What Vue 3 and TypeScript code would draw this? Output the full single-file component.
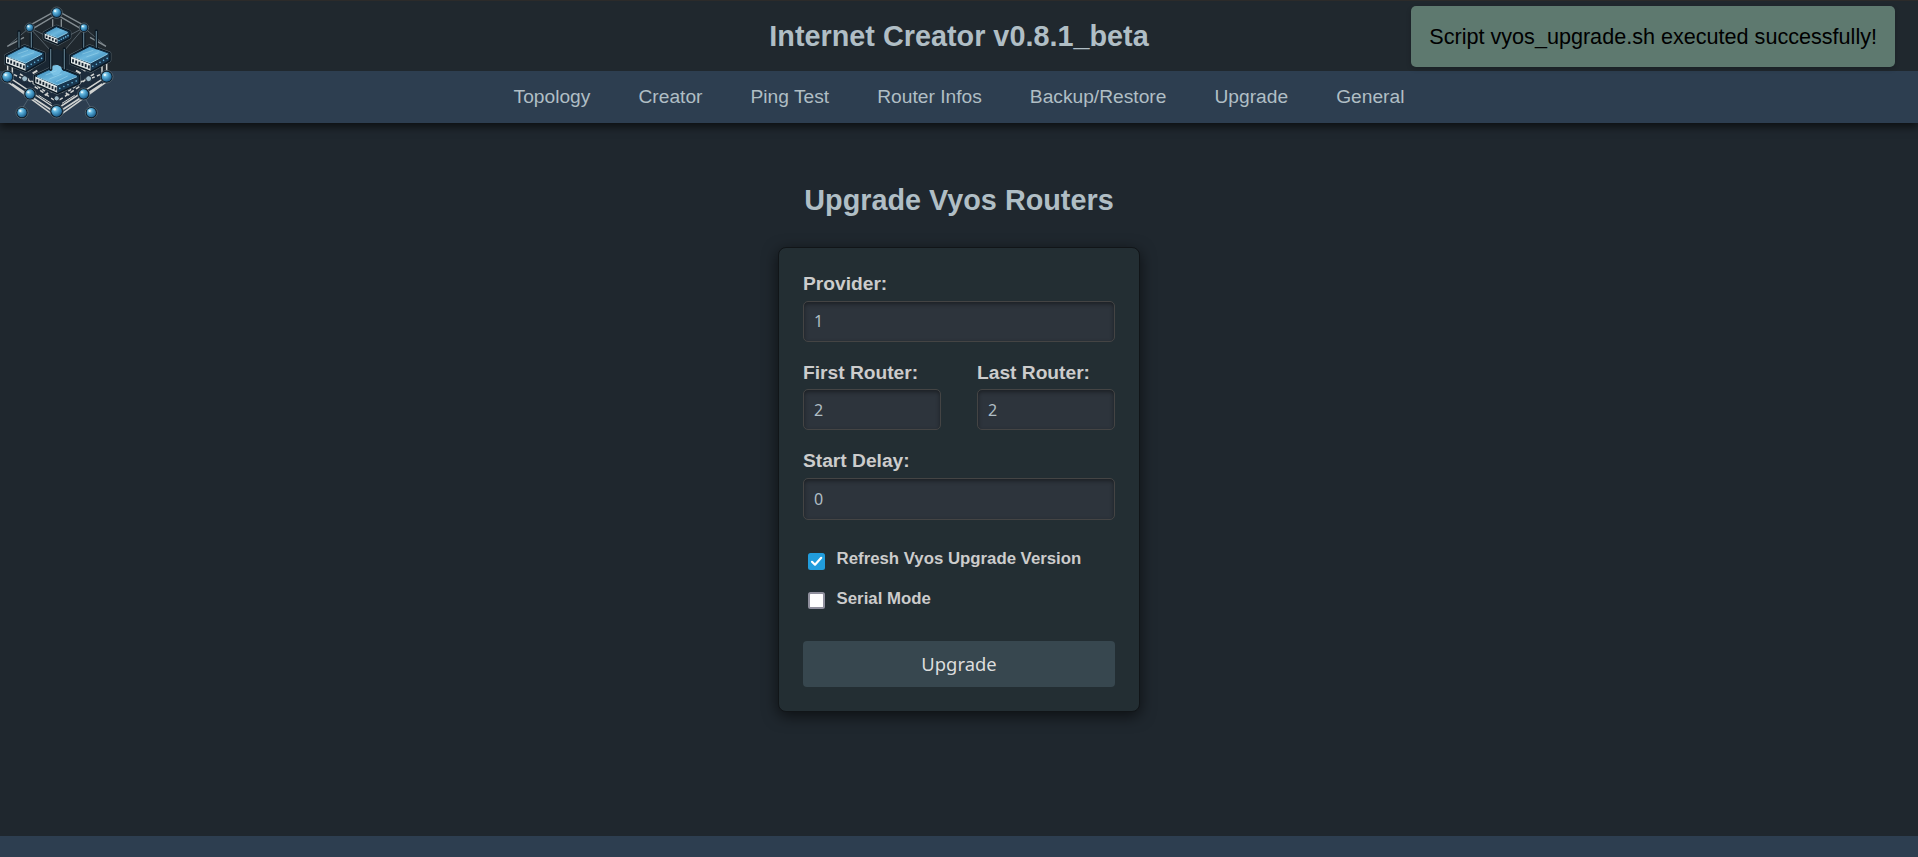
<script setup lang="ts">
import { reactive, ref } from 'vue'

interface Ball { x: number; y: number; r: number }
interface Router { l: number[]; t: number[]; r: number[]; b: number[]; h: number; ports: number }

const navItems: string[] = ['Topology', 'Creator', 'Ping Test', 'Router Infos', 'Backup/Restore', 'Upgrade', 'General']
const form = reactive({ provider: '1', first: '2', last: '2', delay: '0', refresh: true, serial: false })
const message = ref('Script vyos_upgrade.sh executed successfully!')

const balls: Ball[] = [
  { x: 170, y: 38, r: 14 }, { x: 89, y: 83, r: 11 }, { x: 252, y: 83, r: 11 },
  { x: 22, y: 230, r: 16 }, { x: 320, y: 230, r: 16 }, { x: 90, y: 282, r: 15 },
  { x: 251, y: 282, r: 15 }, { x: 170, y: 334, r: 17 }, { x: 66, y: 338, r: 15 }, { x: 274, y: 338, r: 15 },
]
const beads: Ball[] = [{ x: 74, y: 236, r: 9 }, { x: 266, y: 236, r: 9 }, { x: 170, y: 295, r: 8 }]
const routers: Router[] = [
  { l: [134, 99], t: [169, 80], r: [208, 96], b: [173, 115], h: 16, ports: 4 },
  { l: [18, 168], t: [74, 139], r: [131, 160], b: [77, 191], h: 21, ports: 6 },
  { l: [213, 168], t: [269, 139], r: [328, 160], b: [272, 191], h: 21, ports: 6 },
  { l: [106, 228], t: [166, 200], r: [236, 228], b: [172, 257], h: 21, ports: 7 },
]
const antennas: number[][] = [[57, 95, 143], [94, 93, 143], [251, 95, 143], [289, 93, 143], [152, 147, 208], [193, 147, 208]]

const points = (...p: number[][]): string => p.map((v) => v.join(',')).join(' ')
const down = (p: number[], h: number): number[] => [p[0], p[1] + h]
const along = (a: number[], b: number[], n: number, dy: number): number[][] =>
  Array.from({ length: n }, (_, i) => {
    const k = (i + 0.6) / (n + 0.2)
    return [a[0] + (b[0] - a[0]) * k, a[1] + (b[1] - a[1]) * k + dy]
  })
</script>

<template>
  <div class="page">
    <header class="header">
      <h1>Internet Creator v0.8.1_beta</h1>
      <svg class="logo" viewBox="0 0 345 360" aria-label="Internet Creator">
        <defs>
          <radialGradient id="ball" cx=".36" cy=".3" r=".75">
            <stop offset="0" stop-color="#b8e5f5" /><stop offset=".4" stop-color="#52a9d5" /><stop offset="1" stop-color="#195784" />
          </radialGradient>
          <linearGradient id="lid" x1="0" y1="0" x2="1" y2="1">
            <stop offset="0" stop-color="#2f80b2" /><stop offset=".5" stop-color="#6cb7dd" /><stop offset="1" stop-color="#2a7db2" />
          </linearGradient>
        </defs>
        <g fill="none" stroke="#848d92" stroke-width="4">
          <path d="M170 31 89 76M170 44 95 88M170 31 252 76M170 44 246 88" />
          <path d="M89 83 22 139M89 83 135 106M89 83 152 152M252 83 318 139M252 83 208 106M252 83 193 152" stroke="#56626a" stroke-width="3" />
          <path d="M22 139 72 112M318 139 270 112M158 58V86M184 58V86" stroke-width="4" />
        </g>
        <path d="M22 212 170 147 320 212 320 240 170 333 22 240Z" fill="#172634" opacity=".75" />
        <g fill="none" stroke="#d0d2d0" stroke-width="4.5">
          <path d="M23 190V222M37 196V226M320 190V222M306 196V226" />
          <path d="M36 238 156 318M36 252 154 330M25 247 158 344M306 238 184 318M306 252 186 330M317 247 182 344" />
          <path d="M84 213 98 204M257 213 243 204M98 220 112 212M242 220 228 212" stroke-width="6" />
          <path d="M42 224 64 234M84 240 142 278M300 224 276 234M256 240 198 278" stroke-dasharray="10 7" />
          <path d="M60 222 104 249M282 222 238 249M104 260 162 300M238 260 178 300M134 285 160 272M208 285 182 272" stroke-dasharray="12 8" />
          <path d="M116 286 154 310M224 286 186 310" stroke-width="3" />
          <path d="M86 295 66 327M255 295 274 327" stroke="#5f7280" stroke-width="2" />
        </g>
        <g v-for="(r, i) in routers" :key="'r' + i">
          <polygon :points="points(r.l, r.t, r.r, down(r.r, r.h), down(r.b, r.h), down(r.l, r.h))" fill="#142c40" stroke="#5d6b73" stroke-width="12" stroke-linejoin="round" />
          <polygon :points="points(r.l, r.t, r.r, down(r.r, r.h), down(r.b, r.h), down(r.l, r.h))" fill="#142c40" stroke="#0a1722" stroke-width="9" stroke-linejoin="round" />
          <polygon :points="points(r.l, r.b, down(r.b, r.h), down(r.l, r.h))" fill="#e1e7e7" />
          <polygon :points="points(r.b, r.r, down(r.r, r.h), down(r.b, r.h))" fill="#18364f" />
          <polygon :points="points(r.l, r.t, r.r, r.b)" fill="url(#lid)" stroke="#102b40" stroke-width="3" stroke-linejoin="round" />
          <path :d="`M${r.l[0] + 5} ${r.l[1] + 2}L${r.b[0]} ${r.b[1] - 2}L${r.r[0] - 5} ${r.r[1] + 2}`" fill="none" stroke="#8fcbe6" stroke-width="3" />
          <rect v-for="(p, n) in along(r.l, r.b, r.ports, r.h * 0.35)" :key="n" :x="p[0] - 2.5" :y="p[1]" width="5.5" :height="r.h * 0.45" fill="#172431" />
          <circle v-for="(p, n) in along(r.b, r.r, 5, r.h * 0.55)" :key="'d' + n" :cx="p[0]" :cy="p[1]" r="2.4" fill="#69b9df" />
        </g>
        <path d="M151 217c-2-12 6-22 18-22 10 0 17 7 17 16l-9 12-16 4z" fill="#7bc3e6" />
        <path d="M137 225 170 212M148 237 185 222M168 245 203 228M53 162 84 151M64 171 102 158M247 162 280 151M259 171 296 158" stroke="#a2daef" stroke-width="3" opacity=".5" />
        <g v-for="(a, i) in antennas" :key="'a' + i">
          <path :d="`M${a[0]} ${a[1]}V${a[2]}`" stroke="#0b1823" stroke-width="10" stroke-linecap="round" />
          <path :d="`M${a[0]} ${a[1]}V${a[2]}`" stroke="#5f7b8b" stroke-width="3.5" />
        </g>
        <circle v-for="(b, i) in beads" :key="'s' + i" :cx="b.x" :cy="b.y" :r="b.r" fill="#9db9c7" stroke="#172431" stroke-width="3" />
        <g v-for="(b, i) in balls" :key="'b' + i">
          <circle :cx="b.x" :cy="b.y" :r="b.r + 3" fill="#0b1925" stroke="#66757d" stroke-width="2" />
          <circle :cx="b.x" :cy="b.y" :r="b.r - 1" fill="url(#ball)" />
          <circle :cx="b.x - b.r * 0.35" :cy="b.y - b.r * 0.35" :r="b.r * 0.22" fill="#e4f6fb" />
        </g>
      </svg>
      <div class="toast" role="status">{{ message }}</div>
    </header>
    <nav class="nav">
      <a v-for="item in navItems" :key="item">{{ item }}</a>
    </nav>
    <main class="content">
      <h2>Upgrade Vyos Routers</h2>
      <form class="card" @submit.prevent>
        <label class="field"><span>Provider:</span><input v-model="form.provider" type="text"></label>
        <div class="pair">
          <label class="field"><span>First Router:</span><input v-model="form.first" type="text"></label>
          <label class="field"><span>Last Router:</span><input v-model="form.last" type="text"></label>
        </div>
        <label class="field delay"><span>Start Delay:</span><input v-model="form.delay" type="text"></label>
        <div class="checks">
          <label class="check">
            <input v-model="form.refresh" type="checkbox">
            <span class="box"><svg v-if="form.refresh" viewBox="0 0 17 17"><path d="M4 8.8 7 11.7 13.2 4.8" /></svg></span>
            <span>Refresh Vyos Upgrade Version</span>
          </label>
          <label class="check second">
            <input v-model="form.serial" type="checkbox">
            <span class="box"><svg v-if="form.serial" viewBox="0 0 17 17"><path d="M4 8.8 7 11.7 13.2 4.8" /></svg></span>
            <span>Serial Mode</span>
          </label>
        </div>
        <button type="submit">Upgrade</button>
      </form>
    </main>
    <footer class="footer"></footer>
  </div>
</template>

<style>
body { background: #20272e; overflow: hidden; }
</style>

<style scoped>
* { box-sizing: border-box; }
.page { height: 100vh; display: flex; flex-direction: column; background: #1f272e; font-family: "Liberation Sans", Arial, sans-serif; }
.header { position: relative; z-index: 2; height: 71px; flex: none; display: flex; justify-content: center; align-items: center; background: #20282e; border-top: 1px solid #2c2b2a; }
h1, h2 { margin: 0; font-size: 28.8px; line-height: 34px; font-weight: 700; color: #b0bec5; }
.logo { position: absolute; left: 0; top: -1px; width: 115px; height: 120px; }
.toast { position: absolute; right: 23px; top: 5px; height: 61px; padding: 18px; border-radius: 5px; background: #5e796f; color: #000; font-size: 21.6px; line-height: 25px; white-space: nowrap; box-shadow: 0 2px 5px rgba(0, 0, 0, .2); }
.nav { position: relative; z-index: 1; height: 52px; flex: none; display: flex; justify-content: center; align-items: center; gap: 48.1px; background: #2d3e50; box-shadow: 0 4px 8px rgba(0, 0, 0, .6); }
.nav a { font-size: 19.2px; line-height: 22px; color: #b0bec5; }
.content { flex: 1; min-height: 0; display: flex; flex-direction: column; align-items: center; padding-top: 60px; }
.card { width: 362px; height: 465px; margin-top: 30px; padding: 24px; display: flex; flex-direction: column; background: #232e33; border: 1px solid #111518; border-radius: 8px; box-shadow: 0 4px 15px rgba(0, 0, 0, .6); }
.field { display: flex; flex-direction: column; padding-top: 1px; color: #ccc; font-size: 19.2px; font-weight: 700; line-height: 22px; }
.field input { width: 100%; height: 41px; margin-top: 6px; padding: 0 10px 1px; border: 1px solid #444; border-radius: 5px; background: #2d343c; color: #b0bec5; font: 16px "Noto Sans", sans-serif; outline: 0; box-shadow: inset 0 2px 4px rgba(0, 0, 0, .4); }
.pair { display: grid; grid-template-columns: 138px 138px; justify-content: space-between; margin: 18px 0 19px; }
.pair .field { padding-top: 2px; }
.pair .field input { margin-top: 5px; padding: 1px 10px 0; }
.delay input { height: 42px; }
.checks { margin-top: 29px; }
.check { display: flex; align-items: flex-start; height: 40px; padding-left: 5px; color: #ccc; font-size: 16.8px; font-weight: 700; line-height: 19px; }
.check input { position: absolute; opacity: 0; pointer-events: none; }
.box { width: 17px; height: 17px; margin: 4px 11.6px 0 0; flex: none; border: 2px solid #8f8f9d; border-radius: 2.5px; background: #fff; }
.check input:checked + .box { border: 0; background: #219ddd; }
.second .box { margin-top: 3px; }
.box svg { display: block; fill: none; stroke: #fff; stroke-width: 2.2; stroke-linecap: round; stroke-linejoin: round; }
button { height: 46px; flex: none; margin-top: 12px; padding: 0 0 1px; border: 0; border-radius: 4px; background: #37474f; color: #ddd; font: 18.4px "Noto Sans", sans-serif; }
.footer { height: 21px; flex: none; background: #2d3e50; }
</style>
